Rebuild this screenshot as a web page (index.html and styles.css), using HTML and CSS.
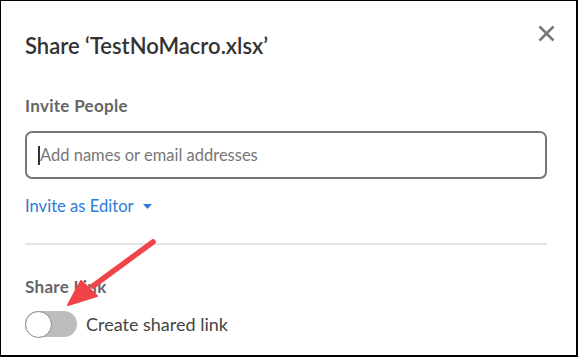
FILE: index.html
```html
<!DOCTYPE html>
<html>
<head>
<meta charset="utf-8">
<link rel="stylesheet" href="styles.css">
</head>
<body>
<div class="dialog">
  <div class="header">
    <h1 class="title">Share ‘TestNoMacro.xlsx’</h1>
    <svg class="close" width="17" height="17" viewBox="0 0 17 17"><path d="M1.5 1.5 L15.5 15.5 M15.5 1.5 L1.5 15.5" stroke="#777" stroke-width="2.5" stroke-linecap="butt"/></svg>
  </div>
  <div class="label">Invite People</div>
  <div class="input"><span class="cursor"></span><span class="placeholder">Add names or email addresses</span></div>
  <div class="role">Invite as Editor <svg class="caret" width="9" height="5" viewBox="0 0 9 5"><path d="M0 0 H9 L4.5 5 Z" fill="#2d7bd8"/></svg></div>
  <div class="divider"></div>
  <div class="label label-link">Share Link</div>
  <div class="toggle-row">
    <div class="toggle"><div class="knob"></div></div>
    <span class="toggle-text">Create shared link</span>
  </div>
  <svg class="arrow" width="100" height="80" viewBox="0 0 100 80">
    <line x1="88" y1="6" x2="28" y2="50" stroke="#f0444a" stroke-width="5.5" stroke-linecap="round"/>
    <polygon points="3,69 16,45 32,60" fill="#f0444a" stroke="#f0444a" stroke-width="2" stroke-linejoin="round"/>
  </svg>
</div>
</body>
</html>
```
FILE: styles.css
```css
html, body { margin: 0; padding: 0; background: #fff; }
.dialog {
  position: relative;
  width: 578px;
  height: 357px;
  box-sizing: border-box;
  border-style: solid;
  border-color: #000;
  border-width: 1px 2px 2px 1px;
  padding: 0 29px 0 24px;
  font-family: Lato, "Liberation Sans", sans-serif;
  background: #fff;
}
.header {
  display: flex;
  justify-content: space-between;
  align-items: flex-start;
  padding-top: 31px;
}
.title {
  margin: 0;
  font-size: 22px;
  font-weight: 600;
  color: #333;
  line-height: 28px;
}
.close { margin-top: -7px; margin-right: -8px; }
.label {
  margin-top: 36px;
  font-size: 17px;
  font-weight: 700;
  color: #666;
  line-height: 20px;
  letter-spacing: 0.3px;
}
.input {
  margin-top: 15px;
  height: 48px;
  box-sizing: border-box;
  border: 2px solid #777;
  border-radius: 7px;
  display: flex;
  align-items: center;
  padding-left: 11px;
}
.cursor {
  width: 1.5px;
  height: 19px;
  background: #333;
  margin-right: 0.5px;
}
.placeholder {
  font-size: 16.5px;
  color: #777;
}
.role {
  margin-top: 17px;
  font-size: 16.6px;
  color: #2d7bd8;
  line-height: 20px;
  display: flex;
  align-items: center;
  gap: 9px;
}
.divider {
  margin-top: 27px;
  height: 2px;
  background: #e5e5e5;
}
.label-link { margin-top: 32px; }
.toggle-row {
  margin-top: 14px;
  display: flex;
  align-items: center;
  gap: 9px;
}
.toggle {
  width: 52px;
  height: 26px;
  border-radius: 13px;
  background: #bdbdbd;
  position: relative;
}
.knob {
  position: absolute;
  left: 0;
  top: -0.5px;
  width: 27px;
  height: 27px;
  box-sizing: border-box;
  border-radius: 50%;
  background: #fff;
  border: 1.5px solid #8a8a8a;
}
.toggle-text {
  font-size: 18px;
  color: #444;
}
.arrow {
  position: absolute;
  left: 64px;
  top: 235px;
}
```
